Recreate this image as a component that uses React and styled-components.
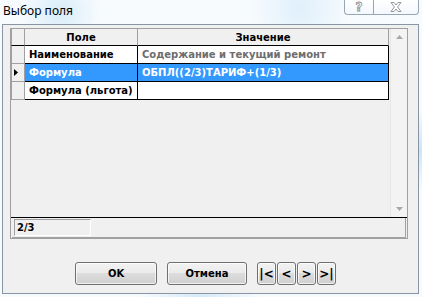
import React from 'react';
import styled, { createGlobalStyle } from 'styled-components';

const Global = createGlobalStyle`
  html, body { margin: 0; padding: 0; }
  body {
    width: 422px;
    height: 297px;
    overflow: hidden;
    background:
      radial-gradient(circle at 60px 12px, rgba(190, 222, 245, 0.55), rgba(255,255,255,0) 40px),
      radial-gradient(circle at 300px 8px, rgba(200, 228, 248, 0.5), rgba(255,255,255,0) 50px),
      radial-gradient(circle at 420px 150px, rgba(185, 220, 245, 0.7), rgba(255,255,255,0) 40px),
      radial-gradient(circle at 200px 297px, rgba(190, 222, 245, 0.6), rgba(255,255,255,0) 60px),
      #f7fbfe;
    font-family: "DejaVu Sans", sans-serif;
  }
`;

const Window = styled.div`
  width: 422px;
  height: 297px;
  display: flex;
  flex-direction: column;
`;

const TitleBar = styled.div`
  height: 24px;
  display: flex;
  justify-content: space-between;
  align-items: flex-start;
`;

const Title = styled.div`
  font-family: "Noto Sans", sans-serif;
  font-size: 12px;
  line-height: 16px;
  color: #000;
  padding: 3px 0 0 3px;
`;

const Caption = styled.div`
  display: flex;
  margin-right: 3px;
`;

const CapBtn = styled.div`
  width: ${p => p.$w}px;
  height: 15px;
  box-sizing: border-box;
  border: 1px solid #97a6b5;
  border-top: none;
  ${p => (p.$first ? 'border-right: none; border-radius: 0 0 0 4px;' : 'border-radius: 0 0 4px 0;')}
  background: linear-gradient(#ffffff, rgba(240, 246, 252, 0.6));
  display: flex;
  align-items: center;
  justify-content: center;
`;

const HelpGlyph = styled.span`
  font-family: "DejaVu Sans", sans-serif;
  font-weight: bold;
  font-size: 12px;
  line-height: 12px;
  color: #ffffff;
  -webkit-text-stroke: 0.8px #8c8c8c;
`;

const Client = styled.div`
  margin: 0 3px 0 2px;
  height: 270px;
  box-sizing: border-box;
  border: 1px solid #8795a4;
  background: #f0f0f0;
  padding: 3px 0 0 7px;
  display: flex;
  flex-direction: column;
`;

const Frame = styled.div`
  width: 398px;
  height: 211px;
  box-sizing: border-box;
  border: 1px solid #a0a0a0;
  display: flex;
  flex-direction: column;
`;

const GridArea = styled.div`
  flex: 1;
  display: flex;
  border-bottom: 1px solid #000;
`;

const Table = styled.div`
  width: 378px;
  display: flex;
  flex-direction: column;
`;

const Row = styled.div`
  display: grid;
  grid-template-columns: 14px 113px 251px;
  height: ${p => (p.$header ? 17 : 18)}px;
`;

const Cell = styled.div`
  box-sizing: border-box;
  border-right: 1px solid ${p => (p.$header ? '#a0a0a0' : '#000')};
  border-bottom: 1px solid #000;
  font-family: "DejaVu Sans", sans-serif;
  font-weight: bold;
  font-size: 10px;
  line-height: 17px;
  padding: 0 0 0 ${p => (p.$header ? 0 : 4)}px;
  text-align: ${p => (p.$header ? 'center' : 'left')};
  white-space: nowrap;
  overflow: hidden;
  background: ${p => (p.$sel ? '#3399ff' : p.$header ? '#f0f0f0' : '#ffffff')};
  color: ${p => (p.$sel ? '#ffffff' : p.$muted ? '#6d6d6d' : '#000')};
`;

const Indicator = styled.div`
  box-sizing: border-box;
  background: #f0f0f0;
  border-right: 1px solid #a0a0a0;
  border-bottom: 1px solid ${p => (p.$header ? '#000' : '#a0a0a0')};
  border-left: 1px solid #a0a0a0;
  display: flex;
  align-items: center;
  padding-left: 2px;
`;

const Arrow = styled.svg`
  display: block;
`;

const ScrollBar = styled.div`
  width: 17px;
  margin-left: 1px;
  background: #f3f3f3;
  border-left: 1px solid #e6e6e6;
  box-sizing: border-box;
  display: flex;
  flex-direction: column;
  justify-content: space-between;
  align-items: center;
  padding: 6px 0 6px;
`;

const StatusBar = styled.div`
  height: 20px;
  box-sizing: border-box;
  margin-left: 1px;
  margin-right: 1px;
  border-right: 1px solid #a0a0a0;
  border-bottom: 1px solid #a0a0a0;
  padding: 1px 0 0 2px;
`;

const StatusPanel = styled.div`
  width: 77px;
  height: 17px;
  box-sizing: border-box;
  border-top: 1px solid #a0a0a0;
  border-left: 1px solid #a0a0a0;
  border-right: 1px solid #ffffff;
  border-bottom: 1px solid #ffffff;
  font-family: "DejaVu Sans", sans-serif;
  font-weight: bold;
  font-size: 10px;
  line-height: 15px;
  padding-left: 2px;
  color: #000;
`;

const ButtonRow = styled.div`
  display: flex;
  align-items: center;
  margin-top: 23px;
  padding-left: 65px;
`;

const Button = styled.button`
  width: ${p => p.$w}px;
  height: 23px;
  margin-right: ${p => p.$gap}px;
  box-sizing: border-box;
  border: 1px solid #707070;
  border-radius: 3px;
  background: linear-gradient(#f2f2f2 0%, #ebebeb 45%, #dddddd 50%, #cfcfcf 100%);
  box-shadow: inset 0 0 0 1px rgba(255, 255, 255, 0.7);
  font-family: "DejaVu Sans", sans-serif;
  font-weight: bold;
  font-size: ${p => p.$fs || 10}px;
  color: #000;
  padding: 0;
  display: flex;
  align-items: center;
  justify-content: center;
`;

const rows = [
  { name: 'Наименование', value: 'Содержание и текущий ремонт', muted: true },
  { name: 'Формула', value: 'ОБПЛ((2/3)ТАРИФ+(1/3)', sel: true },
  { name: 'Формула (льгота)', value: '' },
];

export default function App() {
  return (
    <Window>
      <Global />
      <TitleBar>
        <Title>Выбор поля</Title>
        <Caption>
          <CapBtn $w={29} $first>
            <HelpGlyph>?</HelpGlyph>
          </CapBtn>
          <CapBtn $w={46}>
            <svg width="12" height="10" viewBox="0 0 12 10">
              <path d="M1 0.5 L4 0.5 L6 3 L8 0.5 L11 0.5 L7.6 5 L11 9.5 L8 9.5 L6 7 L4 9.5 L1 9.5 L4.4 5 Z" fill="#ffffff" stroke="#8c8c8c" strokeWidth="0.9" />
            </svg>
          </CapBtn>
        </Caption>
      </TitleBar>
      <Client>
        <Frame>
          <GridArea>
            <Table>
              <Row $header>
                <Indicator $header />
                <Cell $header>Поле</Cell>
                <Cell $header>Значение</Cell>
              </Row>
              {rows.map(r => (
                <Row key={r.name}>
                  <Indicator>
                    {r.sel && (
                      <Arrow width="4" height="7" viewBox="0 0 4 7">
                        <path d="M0 0 L4 3.5 L0 7 Z" fill="#000" />
                      </Arrow>
                    )}
                  </Indicator>
                  <Cell $sel={r.sel}>{r.name}</Cell>
                  <Cell $sel={r.sel} $muted={r.muted}>{r.value}</Cell>
                </Row>
              ))}
            </Table>
            <ScrollBar>
              <svg width="7" height="4" viewBox="0 0 7 4"><path d="M0 4 L3.5 0 L7 4 Z" fill="#a8a8a8" /></svg>
              <svg width="7" height="4" viewBox="0 0 7 4"><path d="M0 0 L3.5 4 L7 0 Z" fill="#a8a8a8" /></svg>
            </ScrollBar>
          </GridArea>
          <StatusBar>
            <StatusPanel>2/3</StatusPanel>
          </StatusBar>
        </Frame>
        <ButtonRow>
          <Button $w={82} $gap={10}>OK</Button>
          <Button $w={80} $gap={10}>Отмена</Button>
          <Button $w={19} $gap={1} $fs={12}>|&lt;</Button>
          <Button $w={19} $gap={1} $fs={12}>&lt;</Button>
          <Button $w={19} $gap={1} $fs={12}>&gt;</Button>
          <Button $w={19} $gap={1} $fs={12}>&gt;|</Button>
        </ButtonRow>
      </Client>
    </Window>
  );
}
